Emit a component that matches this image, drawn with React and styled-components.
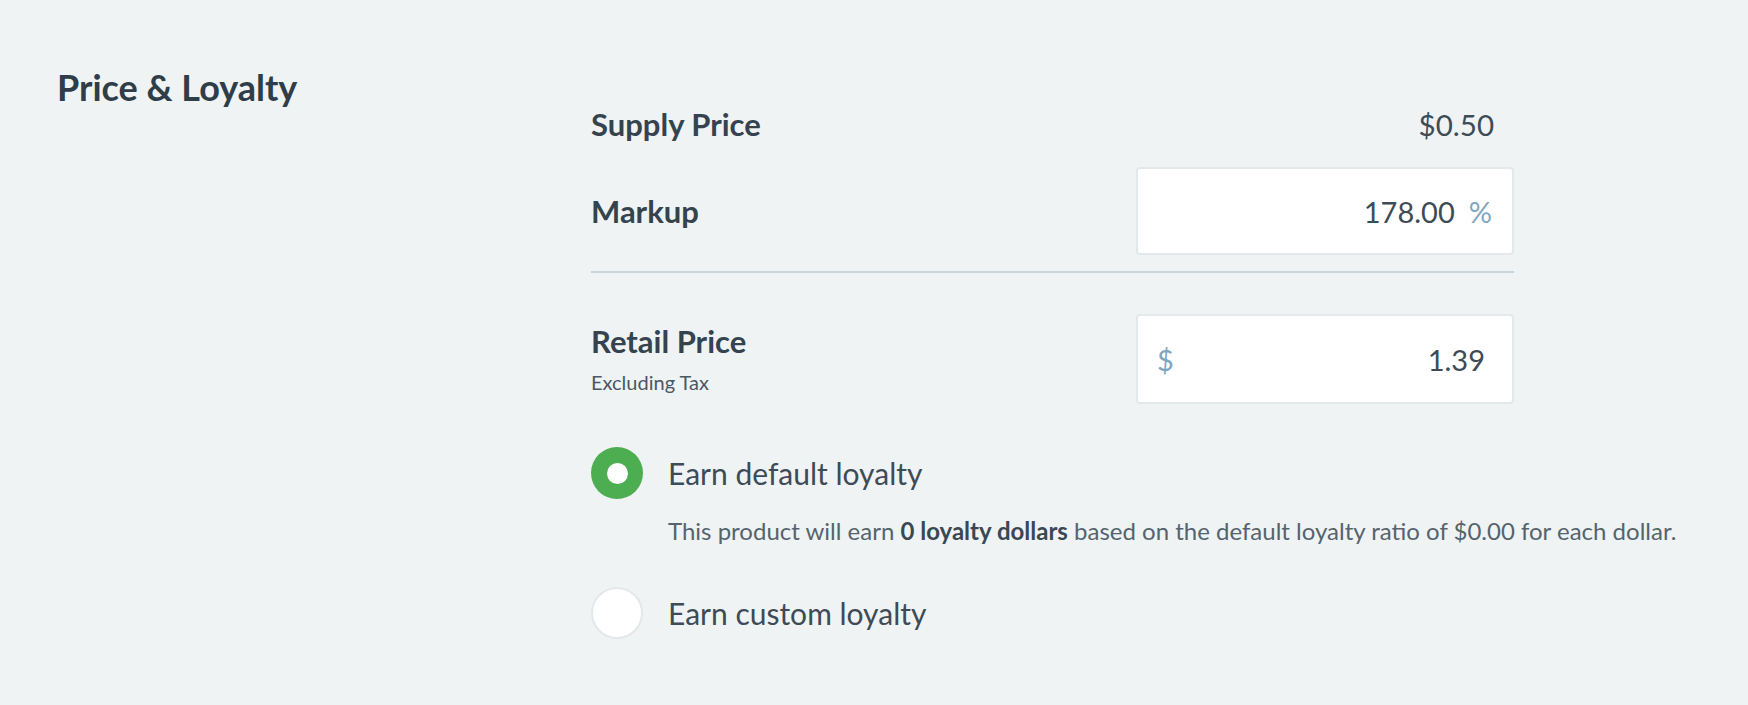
import React from 'react';
import styled, { createGlobalStyle } from 'styled-components';

const GlobalStyle = createGlobalStyle`
  body {
    margin: 0;
    background: #eff3f4;
    font-family: Lato, 'Open Sans', sans-serif;
    color: #34434e;
  }
`;

const App = () => {
  return (
    <>
      <GlobalStyle />
      <Section>
        <Title>Price &amp; Loyalty</Title>
        <Form>
          <Row height={56}>
            <Label>Supply Price</Label>
            <Value>$0.50</Value>
          </Row>
          <Row height={88} top={15}>
            <Label>Markup</Label>
            <InputBox padRight={20}>
              <InputValue>178.00</InputValue>
              <Unit after>%</Unit>
            </InputBox>
          </Row>
          <Divider />
          <Row height={90} top={41}>
            <LabelBlock>
              <Label>Retail Price</Label>
              <SubLabel>Excluding Tax</SubLabel>
            </LabelBlock>
            <InputBox padRight={27}>
              <Unit>$</Unit>
              <InputValue grow>1.39</InputValue>
            </InputBox>
          </Row>
          <Option top={43}>
            <Radio checked />
            <OptionText>Earn default loyalty</OptionText>
          </Option>
          <Hint>
            This product will earn <b>0 loyalty dollars</b> based on the default loyalty
            ratio of $0.00 for each dollar.
          </Hint>
          <Option top={41}>
            <Radio />
            <OptionText>Earn custom loyalty</OptionText>
          </Option>
        </Form>
      </Section>
    </>
  );
};

export default App;

const Section = styled.div`
  display: grid;
  grid-template-columns: 534px 923px;
  padding-left: 57px;
  min-height: 705px;
  box-sizing: border-box;
`;

const Title = styled.h2`
  margin: 63px 0 0;
  font-size: 36px;
  line-height: 48px;
  font-weight: 700;
  color: #2e3d48;
  align-self: start;
`;

const Form = styled.div`
  display: flex;
  flex-direction: column;
  padding-top: 96px;
`;

const Row = styled.div`
  display: flex;
  align-items: center;
  justify-content: space-between;
  height: ${(p) => p.height}px;
  margin-top: ${(p) => p.top || 0}px;
`;

const Label = styled.div`
  font-size: 31px;
  font-weight: 700;
  line-height: 36px;
  color: #34434e;
`;

const LabelBlock = styled.div`
  display: flex;
  flex-direction: column;
`;

const SubLabel = styled.div`
  font-size: 20px;
  line-height: 28px;
  margin-top: 9px;
  color: #4a5863;
`;

const Value = styled.div`
  font-size: 29.5px;
  padding-right: 20px;
  color: #3d4b56;
`;

const InputBox = styled.div`
  width: 378px;
  height: 100%;
  box-sizing: border-box;
  display: flex;
  align-items: center;
  justify-content: flex-end;
  gap: 14px;
  padding: 0 ${(p) => p.padRight}px 0 19px;
  background: #fff;
  border: 2px solid #e3e8eb;
  border-radius: 4px;
`;

const InputValue = styled.span`
  font-size: 29px;
  color: #3d4b56;
  flex: ${(p) => (p.grow ? 1 : 'none')};
  text-align: right;
`;

const Unit = styled.span`
  font-size: 29px;
  color: #7fa6c0;
`;

const Divider = styled.div`
  height: 2px;
  margin-top: 16px;
  background: #c9d3d8;
`;

const Option = styled.div`
  display: flex;
  align-items: center;
  gap: 25px;
  margin-top: ${(p) => p.top}px;
`;

const Radio = styled.span`
  width: 52px;
  height: 52px;
  border-radius: 50%;
  box-sizing: border-box;
  flex: none;
  display: flex;
  align-items: center;
  justify-content: center;
  background: ${(p) => (p.checked ? '#4cae50' : '#fff')};
  border: ${(p) => (p.checked ? 'none' : '2px solid #e3e8eb')};

  &::after {
    content: '';
    display: ${(p) => (p.checked ? 'block' : 'none')};
    width: 21px;
    height: 21px;
    border-radius: 50%;
    background: #fff;
  }
`;

const OptionText = styled.span`
  font-size: 30px;
  line-height: 40px;
  color: #3d4b56;
`;

const Hint = styled.p`
  margin: 17px 0 0 77px;
  font-size: 24px;
  line-height: 30px;
  color: #55636d;
  white-space: nowrap;

  b {
    font-weight: 700;
    color: #3a4853;
  }
`;
